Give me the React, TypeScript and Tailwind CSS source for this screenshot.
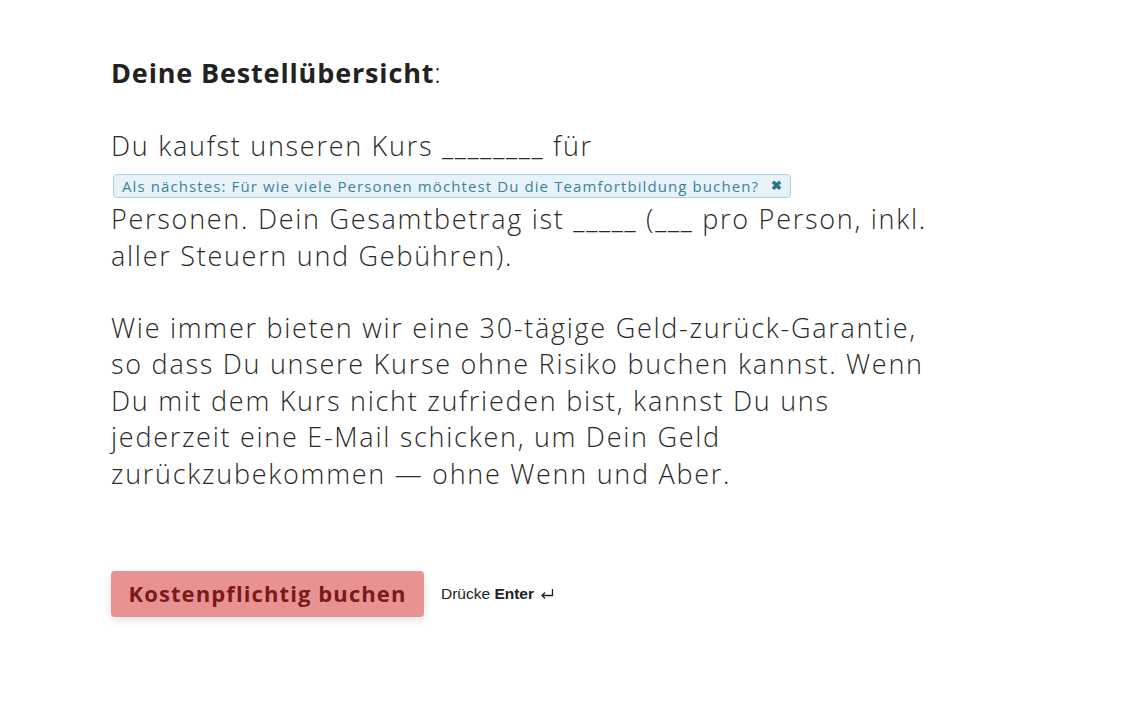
import { useState } from "react";

export default function App() {
  const [hintOpen, setHintOpen] = useState(true);

  return (
    <div className="min-h-screen bg-white pt-[55px] pl-[111px] text-[#2a2a2a] font-['Open_Sans','Noto_Sans',sans-serif]">
      <div className="w-[860px] text-[27px] leading-[36.4px] font-light tracking-[1.72px]">
        <p className="text-[#222]">
          <strong className="font-bold tracking-[0.85px]">Deine Bestellübersicht</strong>:
        </p>

        <p className="mt-[37px]">
          Du kaufst unseren Kurs ________ für
          <br />
          {hintOpen && (
            <span className="inline-flex h-[36px] items-center pt-[6px] align-top">
              <span className="ml-[2px] inline-flex h-[24px] items-center gap-[12px] rounded-[4px] border border-[#a8d2e2] bg-[#e7f3f8] px-[8px] text-[15px] font-normal tracking-[1.1px] text-[#3b82a2]">
                Als nächstes: Für wie viele Personen möchtest Du die Teamfortbildung buchen?
                <button
                  onClick={() => setHintOpen(false)}
                  className="text-[13px] font-bold leading-none tracking-normal text-[#2f6f8c]"
                >
                  ✖
                </button>
              </span>
            </span>
          )}
          <br />
          Personen. Dein Gesamtbetrag ist _____ (___ pro Person, inkl.
          <br />
          aller Steuern und Gebühren).
        </p>

        <p className="mt-[36px]">
          Wie immer bieten wir eine 30-tägige Geld-zurück-Garantie,
          <br />
          so dass Du unsere Kurse ohne Risiko buchen kannst. Wenn
          <br />
          Du mit dem Kurs nicht zufrieden bist, kannst Du uns
          <br />
          jederzeit eine E-Mail schicken, um Dein Geld
          <br />
          zurückzubekommen — ohne Wenn und Aber.
        </p>
      </div>

      <div className="mt-[79px] flex items-center gap-[17px]">
        <button className="h-[46px] w-[313px] rounded-[4px] bg-[#e99292] pb-[2px] text-[22px] font-bold tracking-[1.1px] text-[#7a1a1a] shadow-[0_3px_10px_rgba(0,0,0,0.12)]">
          Kostenpflichtig buchen
        </button>
        <span className="flex items-center gap-[6px] font-['Liberation_Sans',sans-serif] text-[15.5px] text-[#222]">
          <span>
            Drücke <b>Enter</b>
          </span>
          <svg width="14" height="12" viewBox="0 0 14 12" fill="none" stroke="#222" strokeWidth="1.3">
            <path d="M12.5 1 V7.5 H2" />
            <path d="M5 4.5 L2 7.5 L5 10.5" />
          </svg>
        </span>
      </div>
    </div>
  );
}
